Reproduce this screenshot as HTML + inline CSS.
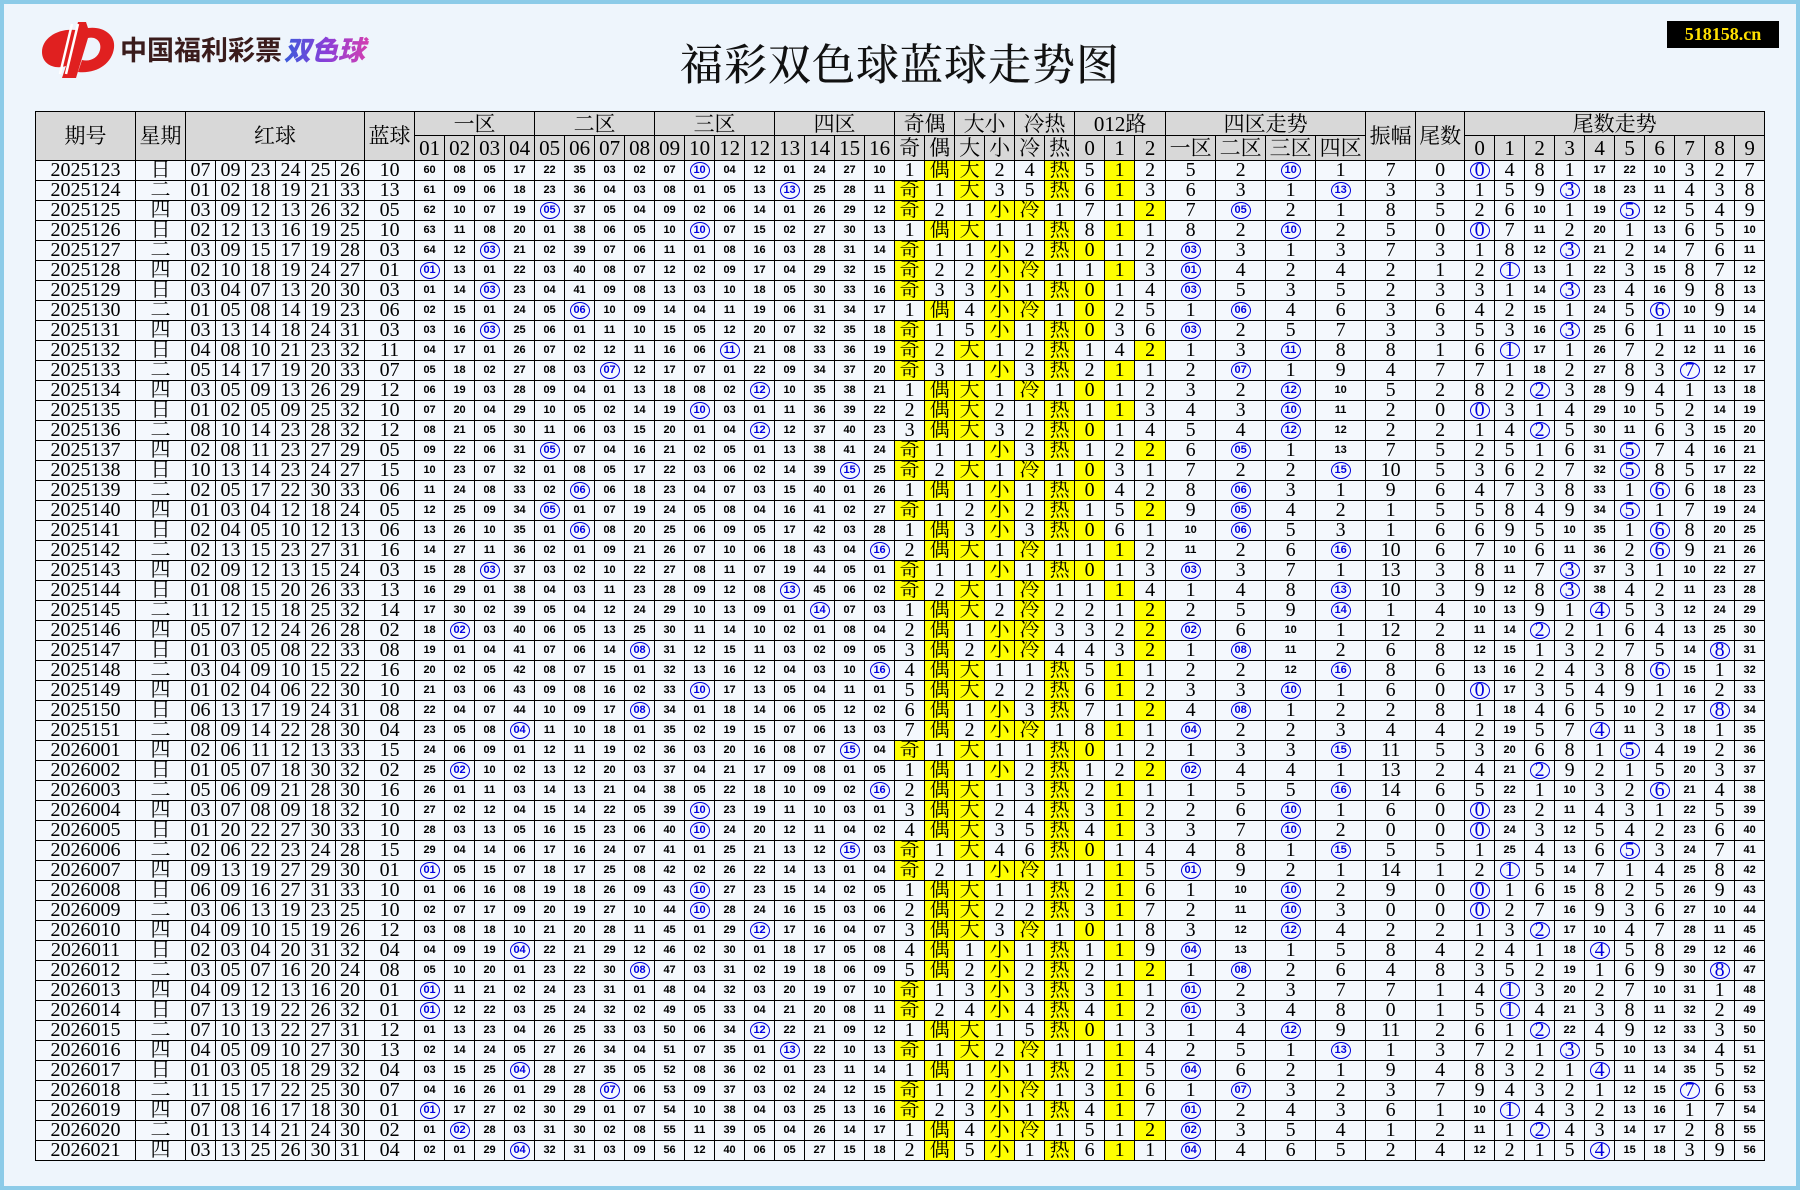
<!DOCTYPE html>
<html><head><meta charset="utf-8"><style>
*{margin:0;padding:0}
html,body{width:1800px;height:1190px;overflow:hidden}
body{background:#eef5fc;position:relative;box-sizing:border-box;border:4px solid #8ccbe8}
#logo{position:absolute;left:32px;top:12px}
#title{position:absolute;left:-4px;width:1800px;top:37px;text-align:center;font:500 43px/52px "Liberation Serif","Noto Serif CJK SC",serif;color:#111;letter-spacing:1px}
#badge{position:absolute;left:1663px;top:17px;width:112px;height:27px;background:#000;color:#ffe000;font:bold 18px/27px "Liberation Serif",serif;text-align:center}
table{position:absolute;left:31px;top:107px;border-collapse:collapse;table-layout:fixed;width:1730px;background:#f4f8fd}
td,th{border:1px solid #000;text-align:center;padding:0;overflow:hidden;white-space:nowrap}
th{background:#d8d8d8;font:21px/22px "Liberation Serif","Noto Serif CJK SC",serif;font-weight:normal;color:#000}
tr.h1 th{height:23px}
tr.h2 th{height:24px}
tbody tr{height:20px}
tbody td{height:19px;font:20px/17px "Liberation Serif","Noto Serif CJK SC",serif;color:#000;vertical-align:middle}
tbody td:nth-child(n+10):nth-child(-n+25),td.s{font:bold 11px/17px "Liberation Sans",sans-serif}
td.y{background:#ffff00}
b{display:inline-block;border:1.5px solid #0000e0;border-radius:50%;color:#0000e0;min-width:16px;height:15px;line-height:15px;font-weight:inherit;padding:0 1px;vertical-align:top}
b.k{font:bold 11px/15px "Liberation Sans",sans-serif}
</style></head><body>
<svg id="logo" width="360" height="66" viewBox="0 0 360 66">
<defs><linearGradient id="g" x1="0" x2="1"><stop offset="0" stop-color="#3b5bdb"/><stop offset="0.5" stop-color="#8a3fd8"/><stop offset="1" stop-color="#d43fb0"/></linearGradient></defs>
<path d="M40 14 C22 12 6 22 6 36 C6 48 18 54 30 50 L26 62 L40 62 L52 22 C60 20 66 26 64 34 C62 42 54 46 46 44 L42 56 C60 58 76 48 78 32 C80 18 66 10 52 12 L50 6 L42 6 Z" fill="#e02020"/>
<path d="M36 8 L24 58 M42 8 L30 58" stroke="#fff" stroke-width="2.5" fill="none"/>
<text x="84" y="44" font-family="Noto Sans CJK SC,sans-serif" font-weight="bold" font-size="27" fill="#3a1c1c">中国福利彩票</text>
<text x="248" y="44" font-family="Noto Sans CJK SC,sans-serif" font-weight="900" font-size="27" fill="url(#g)" font-style="italic">双色球</text>
</svg>
<div id="title">福彩双色球蓝球走势图</div>
<div id="badge">518158.cn</div>
<table>
<colgroup><col style="width:100px"><col style="width:50px"><col style="width:30px"><col style="width:30px"><col style="width:30px"><col style="width:30px"><col style="width:30px"><col style="width:29px"><col style="width:50px">
<col style="width:30px"><col style="width:30px"><col style="width:30px"><col style="width:30px"><col style="width:30px"><col style="width:30px"><col style="width:30px"><col style="width:30px"><col style="width:30px"><col style="width:30px"><col style="width:30px"><col style="width:30px"><col style="width:30px"><col style="width:30px"><col style="width:30px"><col style="width:30px">
<col style="width:30px"><col style="width:30px"><col style="width:30px"><col style="width:30px"><col style="width:30px"><col style="width:30px"><col style="width:30px"><col style="width:30px"><col style="width:31px">
<col style="width:50px"><col style="width:50px"><col style="width:50px"><col style="width:50px"><col style="width:50px"><col style="width:49px">
<col style="width:30px"><col style="width:30px"><col style="width:30px"><col style="width:30px"><col style="width:30px"><col style="width:30px"><col style="width:30px"><col style="width:30px"><col style="width:30px"><col style="width:30px"></colgroup>
<thead>
<tr class="h1"><th rowspan=2>期号</th><th rowspan=2>星期</th><th rowspan=2 colspan=6>红球</th><th rowspan=2>蓝球</th><th colspan=4>一区</th><th colspan=4>二区</th><th colspan=4>三区</th><th colspan=4>四区</th><th colspan=2>奇偶</th><th colspan=2>大小</th><th colspan=2>冷热</th><th colspan=3>012路</th><th colspan=4>四区走势</th><th rowspan=2>振幅</th><th rowspan=2>尾数</th><th colspan=10>尾数走势</th></tr>
<tr class="h2"><th>01</th><th>02</th><th>03</th><th>04</th><th>05</th><th>06</th><th>07</th><th>08</th><th>09</th><th>10</th><th>12</th><th>12</th><th>13</th><th>14</th><th>15</th><th>16</th><th>奇</th><th>偶</th><th>大</th><th>小</th><th>冷</th><th>热</th><th>0</th><th>1</th><th>2</th><th>一区</th><th>二区</th><th>三区</th><th>四区</th><th>0</th><th>1</th><th>2</th><th>3</th><th>4</th><th>5</th><th>6</th><th>7</th><th>8</th><th>9</th></tr>
</thead>
<tbody>
<tr><td>2025123<td>日<td>07<td>09<td>23<td>24<td>25<td>26<td>10<td>60<td>08<td>05<td>17<td>22<td>35<td>03<td>02<td>07<td><b>10</b><td>04<td>12<td>01<td>24<td>27<td>10<td>1<td class=y>偶<td class=y>大<td>2<td>4<td class=y>热<td>5<td class=y>1<td>2<td>5<td>2<td><b class=k>10</b><td>1<td>7<td>0<td><b>0</b><td>4<td>8<td>1<td class=s>17<td class=s>22<td class=s>10<td>3<td>2<td>7</tr>
<tr><td>2025124<td>二<td>01<td>02<td>18<td>19<td>21<td>33<td>13<td>61<td>09<td>06<td>18<td>23<td>36<td>04<td>03<td>08<td>01<td>05<td>13<td><b>13</b><td>25<td>28<td>11<td class=y>奇<td>1<td class=y>大<td>3<td>5<td class=y>热<td>6<td class=y>1<td>3<td>6<td>3<td>1<td><b class=k>13</b><td>3<td>3<td>1<td>5<td>9<td><b>3</b><td class=s>18<td class=s>23<td class=s>11<td>4<td>3<td>8</tr>
<tr><td>2025125<td>四<td>03<td>09<td>12<td>13<td>26<td>32<td>05<td>62<td>10<td>07<td>19<td><b>05</b><td>37<td>05<td>04<td>09<td>02<td>06<td>14<td>01<td>26<td>29<td>12<td class=y>奇<td>2<td>1<td class=y>小<td class=y>冷<td>1<td>7<td>1<td class=y>2<td>7<td><b class=k>05</b><td>2<td>1<td>8<td>5<td>2<td>6<td class=s>10<td>1<td class=s>19<td><b>5</b><td class=s>12<td>5<td>4<td>9</tr>
<tr><td>2025126<td>日<td>02<td>12<td>13<td>16<td>19<td>25<td>10<td>63<td>11<td>08<td>20<td>01<td>38<td>06<td>05<td>10<td><b>10</b><td>07<td>15<td>02<td>27<td>30<td>13<td>1<td class=y>偶<td class=y>大<td>1<td>1<td class=y>热<td>8<td class=y>1<td>1<td>8<td>2<td><b class=k>10</b><td>2<td>5<td>0<td><b>0</b><td>7<td class=s>11<td>2<td class=s>20<td>1<td class=s>13<td>6<td>5<td class=s>10</tr>
<tr><td>2025127<td>二<td>03<td>09<td>15<td>17<td>19<td>28<td>03<td>64<td>12<td><b>03</b><td>21<td>02<td>39<td>07<td>06<td>11<td>01<td>08<td>16<td>03<td>28<td>31<td>14<td class=y>奇<td>1<td>1<td class=y>小<td>2<td class=y>热<td class=y>0<td>1<td>2<td><b class=k>03</b><td>3<td>1<td>3<td>7<td>3<td>1<td>8<td class=s>12<td><b>3</b><td class=s>21<td>2<td class=s>14<td>7<td>6<td class=s>11</tr>
<tr><td>2025128<td>四<td>02<td>10<td>18<td>19<td>24<td>27<td>01<td><b>01</b><td>13<td>01<td>22<td>03<td>40<td>08<td>07<td>12<td>02<td>09<td>17<td>04<td>29<td>32<td>15<td class=y>奇<td>2<td>2<td class=y>小<td class=y>冷<td>1<td>1<td class=y>1<td>3<td><b class=k>01</b><td>4<td>2<td>4<td>2<td>1<td>2<td><b>1</b><td class=s>13<td>1<td class=s>22<td>3<td class=s>15<td>8<td>7<td class=s>12</tr>
<tr><td>2025129<td>日<td>03<td>04<td>07<td>13<td>20<td>30<td>03<td>01<td>14<td><b>03</b><td>23<td>04<td>41<td>09<td>08<td>13<td>03<td>10<td>18<td>05<td>30<td>33<td>16<td class=y>奇<td>3<td>3<td class=y>小<td>1<td class=y>热<td class=y>0<td>1<td>4<td><b class=k>03</b><td>5<td>3<td>5<td>2<td>3<td>3<td>1<td class=s>14<td><b>3</b><td class=s>23<td>4<td class=s>16<td>9<td>8<td class=s>13</tr>
<tr><td>2025130<td>二<td>01<td>05<td>08<td>14<td>19<td>23<td>06<td>02<td>15<td>01<td>24<td>05<td><b>06</b><td>10<td>09<td>14<td>04<td>11<td>19<td>06<td>31<td>34<td>17<td>1<td class=y>偶<td>4<td class=y>小<td class=y>冷<td>1<td class=y>0<td>2<td>5<td>1<td><b class=k>06</b><td>4<td>6<td>3<td>6<td>4<td>2<td class=s>15<td>1<td class=s>24<td>5<td><b>6</b><td class=s>10<td>9<td class=s>14</tr>
<tr><td>2025131<td>四<td>03<td>13<td>14<td>18<td>24<td>31<td>03<td>03<td>16<td><b>03</b><td>25<td>06<td>01<td>11<td>10<td>15<td>05<td>12<td>20<td>07<td>32<td>35<td>18<td class=y>奇<td>1<td>5<td class=y>小<td>1<td class=y>热<td class=y>0<td>3<td>6<td><b class=k>03</b><td>2<td>5<td>7<td>3<td>3<td>5<td>3<td class=s>16<td><b>3</b><td class=s>25<td>6<td>1<td class=s>11<td class=s>10<td class=s>15</tr>
<tr><td>2025132<td>日<td>04<td>08<td>10<td>21<td>23<td>32<td>11<td>04<td>17<td>01<td>26<td>07<td>02<td>12<td>11<td>16<td>06<td><b>11</b><td>21<td>08<td>33<td>36<td>19<td class=y>奇<td>2<td class=y>大<td>1<td>2<td class=y>热<td>1<td>4<td class=y>2<td>1<td>3<td><b class=k>11</b><td>8<td>8<td>1<td>6<td><b>1</b><td class=s>17<td>1<td class=s>26<td>7<td>2<td class=s>12<td class=s>11<td class=s>16</tr>
<tr><td>2025133<td>二<td>05<td>14<td>17<td>19<td>20<td>33<td>07<td>05<td>18<td>02<td>27<td>08<td>03<td><b>07</b><td>12<td>17<td>07<td>01<td>22<td>09<td>34<td>37<td>20<td class=y>奇<td>3<td>1<td class=y>小<td>3<td class=y>热<td>2<td class=y>1<td>1<td>2<td><b class=k>07</b><td>1<td>9<td>4<td>7<td>7<td>1<td class=s>18<td>2<td class=s>27<td>8<td>3<td><b>7</b><td class=s>12<td class=s>17</tr>
<tr><td>2025134<td>四<td>03<td>05<td>09<td>13<td>26<td>29<td>12<td>06<td>19<td>03<td>28<td>09<td>04<td>01<td>13<td>18<td>08<td>02<td><b>12</b><td>10<td>35<td>38<td>21<td>1<td class=y>偶<td class=y>大<td>1<td class=y>冷<td>1<td class=y>0<td>1<td>2<td>3<td>2<td><b class=k>12</b><td class=s>10<td>5<td>2<td>8<td>2<td><b>2</b><td>3<td class=s>28<td>9<td>4<td>1<td class=s>13<td class=s>18</tr>
<tr><td>2025135<td>日<td>01<td>02<td>05<td>09<td>25<td>32<td>10<td>07<td>20<td>04<td>29<td>10<td>05<td>02<td>14<td>19<td><b>10</b><td>03<td>01<td>11<td>36<td>39<td>22<td>2<td class=y>偶<td class=y>大<td>2<td>1<td class=y>热<td>1<td class=y>1<td>3<td>4<td>3<td><b class=k>10</b><td class=s>11<td>2<td>0<td><b>0</b><td>3<td>1<td>4<td class=s>29<td class=s>10<td>5<td>2<td class=s>14<td class=s>19</tr>
<tr><td>2025136<td>二<td>08<td>10<td>14<td>23<td>28<td>32<td>12<td>08<td>21<td>05<td>30<td>11<td>06<td>03<td>15<td>20<td>01<td>04<td><b>12</b><td>12<td>37<td>40<td>23<td>3<td class=y>偶<td class=y>大<td>3<td>2<td class=y>热<td class=y>0<td>1<td>4<td>5<td>4<td><b class=k>12</b><td class=s>12<td>2<td>2<td>1<td>4<td><b>2</b><td>5<td class=s>30<td class=s>11<td>6<td>3<td class=s>15<td class=s>20</tr>
<tr><td>2025137<td>四<td>02<td>08<td>11<td>23<td>27<td>29<td>05<td>09<td>22<td>06<td>31<td><b>05</b><td>07<td>04<td>16<td>21<td>02<td>05<td>01<td>13<td>38<td>41<td>24<td class=y>奇<td>1<td>1<td class=y>小<td>3<td class=y>热<td>1<td>2<td class=y>2<td>6<td><b class=k>05</b><td>1<td class=s>13<td>7<td>5<td>2<td>5<td>1<td>6<td class=s>31<td><b>5</b><td>7<td>4<td class=s>16<td class=s>21</tr>
<tr><td>2025138<td>日<td>10<td>13<td>14<td>23<td>24<td>27<td>15<td>10<td>23<td>07<td>32<td>01<td>08<td>05<td>17<td>22<td>03<td>06<td>02<td>14<td>39<td><b>15</b><td>25<td class=y>奇<td>2<td class=y>大<td>1<td class=y>冷<td>1<td class=y>0<td>3<td>1<td>7<td>2<td>2<td><b class=k>15</b><td>10<td>5<td>3<td>6<td>2<td>7<td class=s>32<td><b>5</b><td>8<td>5<td class=s>17<td class=s>22</tr>
<tr><td>2025139<td>二<td>02<td>05<td>17<td>22<td>30<td>33<td>06<td>11<td>24<td>08<td>33<td>02<td><b>06</b><td>06<td>18<td>23<td>04<td>07<td>03<td>15<td>40<td>01<td>26<td>1<td class=y>偶<td>1<td class=y>小<td>1<td class=y>热<td class=y>0<td>4<td>2<td>8<td><b class=k>06</b><td>3<td>1<td>9<td>6<td>4<td>7<td>3<td>8<td class=s>33<td>1<td><b>6</b><td>6<td class=s>18<td class=s>23</tr>
<tr><td>2025140<td>四<td>01<td>03<td>04<td>12<td>18<td>24<td>05<td>12<td>25<td>09<td>34<td><b>05</b><td>01<td>07<td>19<td>24<td>05<td>08<td>04<td>16<td>41<td>02<td>27<td class=y>奇<td>1<td>2<td class=y>小<td>2<td class=y>热<td>1<td>5<td class=y>2<td>9<td><b class=k>05</b><td>4<td>2<td>1<td>5<td>5<td>8<td>4<td>9<td class=s>34<td><b>5</b><td>1<td>7<td class=s>19<td class=s>24</tr>
<tr><td>2025141<td>日<td>02<td>04<td>05<td>10<td>12<td>13<td>06<td>13<td>26<td>10<td>35<td>01<td><b>06</b><td>08<td>20<td>25<td>06<td>09<td>05<td>17<td>42<td>03<td>28<td>1<td class=y>偶<td>3<td class=y>小<td>3<td class=y>热<td class=y>0<td>6<td>1<td class=s>10<td><b class=k>06</b><td>5<td>3<td>1<td>6<td>6<td>9<td>5<td class=s>10<td class=s>35<td>1<td><b>6</b><td>8<td class=s>20<td class=s>25</tr>
<tr><td>2025142<td>二<td>02<td>13<td>15<td>23<td>27<td>31<td>16<td>14<td>27<td>11<td>36<td>02<td>01<td>09<td>21<td>26<td>07<td>10<td>06<td>18<td>43<td>04<td><b>16</b><td>2<td class=y>偶<td class=y>大<td>1<td class=y>冷<td>1<td>1<td class=y>1<td>2<td class=s>11<td>2<td>6<td><b class=k>16</b><td>10<td>6<td>7<td class=s>10<td>6<td class=s>11<td class=s>36<td>2<td><b>6</b><td>9<td class=s>21<td class=s>26</tr>
<tr><td>2025143<td>四<td>02<td>09<td>12<td>13<td>15<td>24<td>03<td>15<td>28<td><b>03</b><td>37<td>03<td>02<td>10<td>22<td>27<td>08<td>11<td>07<td>19<td>44<td>05<td>01<td class=y>奇<td>1<td>1<td class=y>小<td>1<td class=y>热<td class=y>0<td>1<td>3<td><b class=k>03</b><td>3<td>7<td>1<td>13<td>3<td>8<td class=s>11<td>7<td><b>3</b><td class=s>37<td>3<td>1<td class=s>10<td class=s>22<td class=s>27</tr>
<tr><td>2025144<td>日<td>01<td>08<td>15<td>20<td>26<td>33<td>13<td>16<td>29<td>01<td>38<td>04<td>03<td>11<td>23<td>28<td>09<td>12<td>08<td><b>13</b><td>45<td>06<td>02<td class=y>奇<td>2<td class=y>大<td>1<td class=y>冷<td>1<td>1<td class=y>1<td>4<td>1<td>4<td>8<td><b class=k>13</b><td>10<td>3<td>9<td class=s>12<td>8<td><b>3</b><td class=s>38<td>4<td>2<td class=s>11<td class=s>23<td class=s>28</tr>
<tr><td>2025145<td>二<td>11<td>12<td>15<td>18<td>25<td>32<td>14<td>17<td>30<td>02<td>39<td>05<td>04<td>12<td>24<td>29<td>10<td>13<td>09<td>01<td><b>14</b><td>07<td>03<td>1<td class=y>偶<td class=y>大<td>2<td class=y>冷<td>2<td>2<td>1<td class=y>2<td>2<td>5<td>9<td><b class=k>14</b><td>1<td>4<td class=s>10<td class=s>13<td>9<td>1<td><b>4</b><td>5<td>3<td class=s>12<td class=s>24<td class=s>29</tr>
<tr><td>2025146<td>四<td>05<td>07<td>12<td>24<td>26<td>28<td>02<td>18<td><b>02</b><td>03<td>40<td>06<td>05<td>13<td>25<td>30<td>11<td>14<td>10<td>02<td>01<td>08<td>04<td>2<td class=y>偶<td>1<td class=y>小<td class=y>冷<td>3<td>3<td>2<td class=y>2<td><b class=k>02</b><td>6<td class=s>10<td>1<td>12<td>2<td class=s>11<td class=s>14<td><b>2</b><td>2<td>1<td>6<td>4<td class=s>13<td class=s>25<td class=s>30</tr>
<tr><td>2025147<td>日<td>01<td>03<td>05<td>08<td>22<td>33<td>08<td>19<td>01<td>04<td>41<td>07<td>06<td>14<td><b>08</b><td>31<td>12<td>15<td>11<td>03<td>02<td>09<td>05<td>3<td class=y>偶<td>2<td class=y>小<td class=y>冷<td>4<td>4<td>3<td class=y>2<td>1<td><b class=k>08</b><td class=s>11<td>2<td>6<td>8<td class=s>12<td class=s>15<td>1<td>3<td>2<td>7<td>5<td class=s>14<td><b>8</b><td class=s>31</tr>
<tr><td>2025148<td>二<td>03<td>04<td>09<td>10<td>15<td>22<td>16<td>20<td>02<td>05<td>42<td>08<td>07<td>15<td>01<td>32<td>13<td>16<td>12<td>04<td>03<td>10<td><b>16</b><td>4<td class=y>偶<td class=y>大<td>1<td>1<td class=y>热<td>5<td class=y>1<td>1<td>2<td>2<td class=s>12<td><b class=k>16</b><td>8<td>6<td class=s>13<td class=s>16<td>2<td>4<td>3<td>8<td><b>6</b><td class=s>15<td>1<td class=s>32</tr>
<tr><td>2025149<td>四<td>01<td>02<td>04<td>06<td>22<td>30<td>10<td>21<td>03<td>06<td>43<td>09<td>08<td>16<td>02<td>33<td><b>10</b><td>17<td>13<td>05<td>04<td>11<td>01<td>5<td class=y>偶<td class=y>大<td>2<td>2<td class=y>热<td>6<td class=y>1<td>2<td>3<td>3<td><b class=k>10</b><td>1<td>6<td>0<td><b>0</b><td class=s>17<td>3<td>5<td>4<td>9<td>1<td class=s>16<td>2<td class=s>33</tr>
<tr><td>2025150<td>日<td>06<td>13<td>17<td>19<td>24<td>31<td>08<td>22<td>04<td>07<td>44<td>10<td>09<td>17<td><b>08</b><td>34<td>01<td>18<td>14<td>06<td>05<td>12<td>02<td>6<td class=y>偶<td>1<td class=y>小<td>3<td class=y>热<td>7<td>1<td class=y>2<td>4<td><b class=k>08</b><td>1<td>2<td>2<td>8<td>1<td class=s>18<td>4<td>6<td>5<td class=s>10<td>2<td class=s>17<td><b>8</b><td class=s>34</tr>
<tr><td>2025151<td>二<td>08<td>09<td>14<td>22<td>28<td>30<td>04<td>23<td>05<td>08<td><b>04</b><td>11<td>10<td>18<td>01<td>35<td>02<td>19<td>15<td>07<td>06<td>13<td>03<td>7<td class=y>偶<td>2<td class=y>小<td class=y>冷<td>1<td>8<td class=y>1<td>1<td><b class=k>04</b><td>2<td>2<td>3<td>4<td>4<td>2<td class=s>19<td>5<td>7<td><b>4</b><td class=s>11<td>3<td class=s>18<td>1<td class=s>35</tr>
<tr><td>2026001<td>四<td>02<td>06<td>11<td>12<td>13<td>33<td>15<td>24<td>06<td>09<td>01<td>12<td>11<td>19<td>02<td>36<td>03<td>20<td>16<td>08<td>07<td><b>15</b><td>04<td class=y>奇<td>1<td class=y>大<td>1<td>1<td class=y>热<td class=y>0<td>1<td>2<td>1<td>3<td>3<td><b class=k>15</b><td>11<td>5<td>3<td class=s>20<td>6<td>8<td>1<td><b>5</b><td>4<td class=s>19<td>2<td class=s>36</tr>
<tr><td>2026002<td>日<td>01<td>05<td>07<td>18<td>30<td>32<td>02<td>25<td><b>02</b><td>10<td>02<td>13<td>12<td>20<td>03<td>37<td>04<td>21<td>17<td>09<td>08<td>01<td>05<td>1<td class=y>偶<td>1<td class=y>小<td>2<td class=y>热<td>1<td>2<td class=y>2<td><b class=k>02</b><td>4<td>4<td>1<td>13<td>2<td>4<td class=s>21<td><b>2</b><td>9<td>2<td>1<td>5<td class=s>20<td>3<td class=s>37</tr>
<tr><td>2026003<td>二<td>05<td>06<td>09<td>21<td>28<td>30<td>16<td>26<td>01<td>11<td>03<td>14<td>13<td>21<td>04<td>38<td>05<td>22<td>18<td>10<td>09<td>02<td><b>16</b><td>2<td class=y>偶<td class=y>大<td>1<td>3<td class=y>热<td>2<td class=y>1<td>1<td>1<td>5<td>5<td><b class=k>16</b><td>14<td>6<td>5<td class=s>22<td>1<td class=s>10<td>3<td>2<td><b>6</b><td class=s>21<td>4<td class=s>38</tr>
<tr><td>2026004<td>四<td>03<td>07<td>08<td>09<td>18<td>32<td>10<td>27<td>02<td>12<td>04<td>15<td>14<td>22<td>05<td>39<td><b>10</b><td>23<td>19<td>11<td>10<td>03<td>01<td>3<td class=y>偶<td class=y>大<td>2<td>4<td class=y>热<td>3<td class=y>1<td>2<td>2<td>6<td><b class=k>10</b><td>1<td>6<td>0<td><b>0</b><td class=s>23<td>2<td class=s>11<td>4<td>3<td>1<td class=s>22<td>5<td class=s>39</tr>
<tr><td>2026005<td>日<td>01<td>20<td>22<td>27<td>30<td>33<td>10<td>28<td>03<td>13<td>05<td>16<td>15<td>23<td>06<td>40<td><b>10</b><td>24<td>20<td>12<td>11<td>04<td>02<td>4<td class=y>偶<td class=y>大<td>3<td>5<td class=y>热<td>4<td class=y>1<td>3<td>3<td>7<td><b class=k>10</b><td>2<td>0<td>0<td><b>0</b><td class=s>24<td>3<td class=s>12<td>5<td>4<td>2<td class=s>23<td>6<td class=s>40</tr>
<tr><td>2026006<td>二<td>02<td>06<td>22<td>23<td>24<td>28<td>15<td>29<td>04<td>14<td>06<td>17<td>16<td>24<td>07<td>41<td>01<td>25<td>21<td>13<td>12<td><b>15</b><td>03<td class=y>奇<td>1<td class=y>大<td>4<td>6<td class=y>热<td class=y>0<td>1<td>4<td>4<td>8<td>1<td><b class=k>15</b><td>5<td>5<td>1<td class=s>25<td>4<td class=s>13<td>6<td><b>5</b><td>3<td class=s>24<td>7<td class=s>41</tr>
<tr><td>2026007<td>四<td>09<td>13<td>19<td>27<td>29<td>30<td>01<td><b>01</b><td>05<td>15<td>07<td>18<td>17<td>25<td>08<td>42<td>02<td>26<td>22<td>14<td>13<td>01<td>04<td class=y>奇<td>2<td>1<td class=y>小<td class=y>冷<td>1<td>1<td class=y>1<td>5<td><b class=k>01</b><td>9<td>2<td>1<td>14<td>1<td>2<td><b>1</b><td>5<td class=s>14<td>7<td>1<td>4<td class=s>25<td>8<td class=s>42</tr>
<tr><td>2026008<td>日<td>06<td>09<td>16<td>27<td>31<td>33<td>10<td>01<td>06<td>16<td>08<td>19<td>18<td>26<td>09<td>43<td><b>10</b><td>27<td>23<td>15<td>14<td>02<td>05<td>1<td class=y>偶<td class=y>大<td>1<td>1<td class=y>热<td>2<td class=y>1<td>6<td>1<td class=s>10<td><b class=k>10</b><td>2<td>9<td>0<td><b>0</b><td>1<td>6<td class=s>15<td>8<td>2<td>5<td class=s>26<td>9<td class=s>43</tr>
<tr><td>2026009<td>二<td>03<td>06<td>13<td>19<td>23<td>25<td>10<td>02<td>07<td>17<td>09<td>20<td>19<td>27<td>10<td>44<td><b>10</b><td>28<td>24<td>16<td>15<td>03<td>06<td>2<td class=y>偶<td class=y>大<td>2<td>2<td class=y>热<td>3<td class=y>1<td>7<td>2<td class=s>11<td><b class=k>10</b><td>3<td>0<td>0<td><b>0</b><td>2<td>7<td class=s>16<td>9<td>3<td>6<td class=s>27<td class=s>10<td class=s>44</tr>
<tr><td>2026010<td>四<td>04<td>09<td>10<td>15<td>19<td>26<td>12<td>03<td>08<td>18<td>10<td>21<td>20<td>28<td>11<td>45<td>01<td>29<td><b>12</b><td>17<td>16<td>04<td>07<td>3<td class=y>偶<td class=y>大<td>3<td class=y>冷<td>1<td class=y>0<td>1<td>8<td>3<td class=s>12<td><b class=k>12</b><td>4<td>2<td>2<td>1<td>3<td><b>2</b><td class=s>17<td class=s>10<td>4<td>7<td class=s>28<td class=s>11<td class=s>45</tr>
<tr><td>2026011<td>日<td>02<td>03<td>04<td>20<td>31<td>32<td>04<td>04<td>09<td>19<td><b>04</b><td>22<td>21<td>29<td>12<td>46<td>02<td>30<td>01<td>18<td>17<td>05<td>08<td>4<td class=y>偶<td>1<td class=y>小<td>1<td class=y>热<td>1<td class=y>1<td>9<td><b class=k>04</b><td class=s>13<td>1<td>5<td>8<td>4<td>2<td>4<td>1<td class=s>18<td><b>4</b><td>5<td>8<td class=s>29<td class=s>12<td class=s>46</tr>
<tr><td>2026012<td>二<td>03<td>05<td>07<td>16<td>20<td>24<td>08<td>05<td>10<td>20<td>01<td>23<td>22<td>30<td><b>08</b><td>47<td>03<td>31<td>02<td>19<td>18<td>06<td>09<td>5<td class=y>偶<td>2<td class=y>小<td>2<td class=y>热<td>2<td>1<td class=y>2<td>1<td><b class=k>08</b><td>2<td>6<td>4<td>8<td>3<td>5<td>2<td class=s>19<td>1<td>6<td>9<td class=s>30<td><b>8</b><td class=s>47</tr>
<tr><td>2026013<td>四<td>04<td>09<td>12<td>13<td>16<td>20<td>01<td><b>01</b><td>11<td>21<td>02<td>24<td>23<td>31<td>01<td>48<td>04<td>32<td>03<td>20<td>19<td>07<td>10<td class=y>奇<td>1<td>3<td class=y>小<td>3<td class=y>热<td>3<td class=y>1<td>1<td><b class=k>01</b><td>2<td>3<td>7<td>7<td>1<td>4<td><b>1</b><td>3<td class=s>20<td>2<td>7<td class=s>10<td class=s>31<td>1<td class=s>48</tr>
<tr><td>2026014<td>日<td>07<td>13<td>19<td>22<td>26<td>32<td>01<td><b>01</b><td>12<td>22<td>03<td>25<td>24<td>32<td>02<td>49<td>05<td>33<td>04<td>21<td>20<td>08<td>11<td class=y>奇<td>2<td>4<td class=y>小<td>4<td class=y>热<td>4<td class=y>1<td>2<td><b class=k>01</b><td>3<td>4<td>8<td>0<td>1<td>5<td><b>1</b><td>4<td class=s>21<td>3<td>8<td class=s>11<td class=s>32<td>2<td class=s>49</tr>
<tr><td>2026015<td>二<td>07<td>10<td>13<td>22<td>27<td>31<td>12<td>01<td>13<td>23<td>04<td>26<td>25<td>33<td>03<td>50<td>06<td>34<td><b>12</b><td>22<td>21<td>09<td>12<td>1<td class=y>偶<td class=y>大<td>1<td>5<td class=y>热<td class=y>0<td>1<td>3<td>1<td>4<td><b class=k>12</b><td>9<td>11<td>2<td>6<td>1<td><b>2</b><td class=s>22<td>4<td>9<td class=s>12<td class=s>33<td>3<td class=s>50</tr>
<tr><td>2026016<td>四<td>04<td>05<td>09<td>10<td>27<td>30<td>13<td>02<td>14<td>24<td>05<td>27<td>26<td>34<td>04<td>51<td>07<td>35<td>01<td><b>13</b><td>22<td>10<td>13<td class=y>奇<td>1<td class=y>大<td>2<td class=y>冷<td>1<td>1<td class=y>1<td>4<td>2<td>5<td>1<td><b class=k>13</b><td>1<td>3<td>7<td>2<td>1<td><b>3</b><td>5<td class=s>10<td class=s>13<td class=s>34<td>4<td class=s>51</tr>
<tr><td>2026017<td>日<td>01<td>03<td>05<td>18<td>29<td>32<td>04<td>03<td>15<td>25<td><b>04</b><td>28<td>27<td>35<td>05<td>52<td>08<td>36<td>02<td>01<td>23<td>11<td>14<td>1<td class=y>偶<td>1<td class=y>小<td>1<td class=y>热<td>2<td class=y>1<td>5<td><b class=k>04</b><td>6<td>2<td>1<td>9<td>4<td>8<td>3<td>2<td>1<td><b>4</b><td class=s>11<td class=s>14<td class=s>35<td>5<td class=s>52</tr>
<tr><td>2026018<td>二<td>11<td>15<td>17<td>22<td>25<td>30<td>07<td>04<td>16<td>26<td>01<td>29<td>28<td><b>07</b><td>06<td>53<td>09<td>37<td>03<td>02<td>24<td>12<td>15<td class=y>奇<td>1<td>2<td class=y>小<td class=y>冷<td>1<td>3<td class=y>1<td>6<td>1<td><b class=k>07</b><td>3<td>2<td>3<td>7<td>9<td>4<td>3<td>2<td>1<td class=s>12<td class=s>15<td><b>7</b><td>6<td class=s>53</tr>
<tr><td>2026019<td>四<td>07<td>08<td>16<td>17<td>18<td>30<td>01<td><b>01</b><td>17<td>27<td>02<td>30<td>29<td>01<td>07<td>54<td>10<td>38<td>04<td>03<td>25<td>13<td>16<td class=y>奇<td>2<td>3<td class=y>小<td>1<td class=y>热<td>4<td class=y>1<td>7<td><b class=k>01</b><td>2<td>4<td>3<td>6<td>1<td class=s>10<td><b>1</b><td>4<td>3<td>2<td class=s>13<td class=s>16<td>1<td>7<td class=s>54</tr>
<tr><td>2026020<td>二<td>01<td>13<td>14<td>21<td>24<td>30<td>02<td>01<td><b>02</b><td>28<td>03<td>31<td>30<td>02<td>08<td>55<td>11<td>39<td>05<td>04<td>26<td>14<td>17<td>1<td class=y>偶<td>4<td class=y>小<td class=y>冷<td>1<td>5<td>1<td class=y>2<td><b class=k>02</b><td>3<td>5<td>4<td>1<td>2<td class=s>11<td>1<td><b>2</b><td>4<td>3<td class=s>14<td class=s>17<td>2<td>8<td class=s>55</tr>
<tr><td>2026021<td>四<td>03<td>13<td>25<td>26<td>30<td>31<td>04<td>02<td>01<td>29<td><b>04</b><td>32<td>31<td>03<td>09<td>56<td>12<td>40<td>06<td>05<td>27<td>15<td>18<td>2<td class=y>偶<td>5<td class=y>小<td>1<td class=y>热<td>6<td class=y>1<td>1<td><b class=k>04</b><td>4<td>6<td>5<td>2<td>4<td class=s>12<td>2<td>1<td>5<td><b>4</b><td class=s>15<td class=s>18<td>3<td>9<td class=s>56</tr>
</tbody></table>
</body></html>
